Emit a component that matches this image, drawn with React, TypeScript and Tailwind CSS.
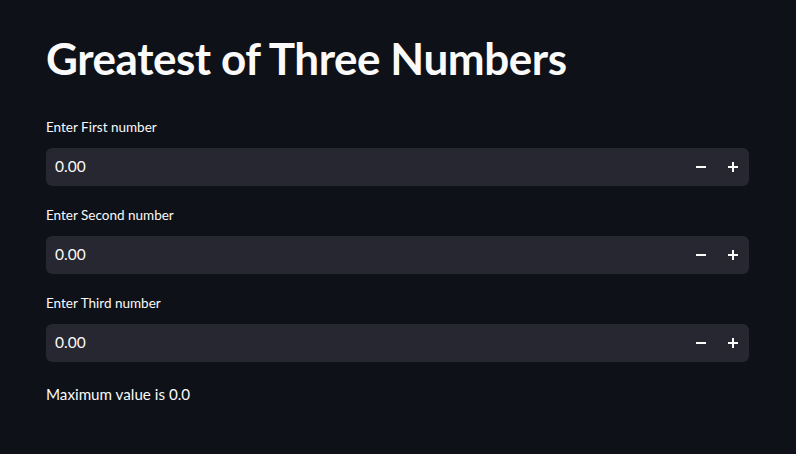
const fields = ["Enter First number", "Enter Second number", "Enter Third number"];

function NumberInput({ label }: { label: string }) {
  return (
    <div className="flex flex-col">
      <label className="h-[22px] flex items-center text-[13.5px] text-[#fafafa]">{label}</label>
      <div className="mt-[10px] h-[38px] flex items-center bg-[#262730] rounded-[6px]">
        <span className="flex-1 pl-[9px] text-[15.5px] text-[#fafafa]">0.00</span>
        <button className="w-8 h-full flex items-center justify-center">
          <svg width="10" height="10" viewBox="0 0 10 10">
            <rect x="0" y="4" width="10" height="2" fill="#fafafa" />
          </svg>
        </button>
        <button className="w-8 h-full flex items-center justify-center">
          <svg width="10" height="10" viewBox="0 0 10 10">
            <rect x="0" y="4" width="10" height="2" fill="#fafafa" />
            <rect x="4" y="0" width="2" height="10" fill="#fafafa" />
          </svg>
        </button>
      </div>
    </div>
  );
}

export default function App() {
  return (
    <div className="min-h-[454px] w-full bg-[#0e1117] font-['Lato',sans-serif] text-[#fafafa]">
      <div className="pl-[46px] pt-[32px] w-[749px]">
        <h1 className="text-[44px] leading-[52px] font-bold tracking-[-0.01em]">Greatest of Three Numbers</h1>
        <div className="mt-[32px] flex flex-col gap-[18px]">
          {fields.map((f) => (
            <NumberInput key={f} label={f} />
          ))}
        </div>
        <p className="mt-[20px] text-[15.2px] leading-6">Maximum value is 0.0</p>
      </div>
    </div>
  );
}
